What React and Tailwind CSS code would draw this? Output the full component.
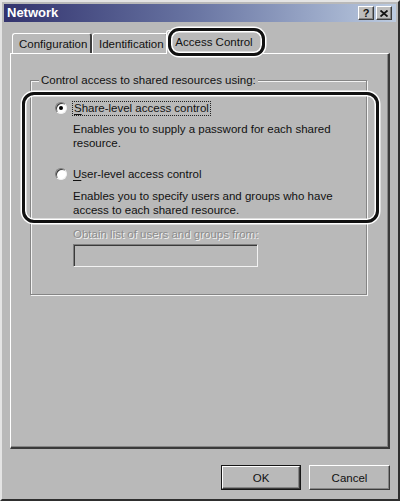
import React from "react";

const raised =
  "border border-t-white border-l-white border-r-[#3c3c3c] border-b-[#3c3c3c] shadow-[inset_-1px_-1px_0_#858585]";

function Radio({ checked }) {
  return (
    <span className="relative inline-flex items-center justify-center w-[12px] h-[12px] rounded-full bg-white border border-t-[#7c7c7c] border-l-[#7c7c7c] border-r-[#f2f2f2] border-b-[#f2f2f2] shadow-[inset_1px_1px_0_#3a3a3a] shrink-0">
      {checked && <span className="w-[4px] h-[4px] rounded-full bg-black" />}
    </span>
  );
}

function Tab({ label, width, active }) {
  if (active) {
    return (
      <div
        className={`relative z-10 -mb-[1px] -ml-[2px] h-[24px] ${width} flex items-center justify-center bg-[#b9b9b9] rounded-t-[3px] border-l border-t border-white border-r-2 border-r-[#3c3c3c]`}
      >
        <span className="-mt-[2px]">{label}</span>
      </div>
    );
  }
  return (
    <div
      className={`h-[20px] ${width} flex items-center pl-[6px] rounded-t-[3px] border-l border-t border-white border-r-2 border-r-[#3c3c3c]`}
    >
      {label}
    </div>
  );
}

export default function App() {
  return (
    <div className="relative w-[400px] h-[501px] bg-[#b9b9b9] border-2 border-t-[#e4e4e4] border-l-[#e4e4e4] border-r-[#2e2e2e] border-b-[#2e2e2e] font-['Liberation_Sans',Arial,sans-serif] text-[11.5px] leading-[14px] text-[#111] overflow-hidden">
      {/* title bar */}
      <div className="mx-[2px] mt-[2px] h-[18px] flex items-center justify-between bg-gradient-to-r from-[#33336e] via-[#6b77a4] to-[#bccbe0] pl-[3px] pr-[4px]">
        <span className="text-white font-bold text-[13px]">Network</span>
        <div className="flex gap-[2px]">
          <div className={`w-[16px] h-[14px] bg-[#bdbdbd] flex items-center justify-center font-bold text-[11px] leading-none ${raised}`}>
            ?
          </div>
          <div className={`w-[16px] h-[14px] bg-[#bdbdbd] flex items-center justify-center ${raised}`}>
            <svg width="8" height="7" viewBox="0 0 8 7">
              <path d="M0.5 0.5 L7.5 6.5 M7.5 0.5 L0.5 6.5" stroke="#111" strokeWidth="1.8" />
            </svg>
          </div>
        </div>
      </div>

      {/* tabs */}
      <div className="mt-[8px] h-[23px] pl-[10px] flex items-end">
        <Tab label="Configuration" width="w-[80px]" />
        <Tab label="Identification" width="w-[76px]" />
        <Tab label="Access Control" width="w-[97px]" active />
      </div>

      {/* panel */}
      <div className="ml-[8px] w-[380px] h-[396px] border-l border-t border-white border-r-2 border-b-2 border-r-[#3a3a3a] border-b-[#3a3a3a] shadow-[inset_-1px_-1px_0_#868686]">
        <div className="relative ml-[19px] mt-[26px] w-[337px] h-[215px] border border-[#858585] shadow-[inset_1px_1px_0_#f2f2f2,1px_1px_0_#f2f2f2]">
          <span className="absolute -top-[8px] left-[8px] px-[2px] bg-[#b9b9b9]">
            Control access to shared resources using:
          </span>

          <div className="pl-[24px] pt-[19px]">
            <div className="flex items-center gap-[6px] h-[16px]">
              <Radio checked />
              <span className="border border-dotted border-[#222] px-[1px] -ml-[1px] leading-[13px]">
                <span className="underline underline-offset-2">S</span>hare-level access control
              </span>
            </div>
            <p className="ml-[18px] mt-[6px] w-[275px]">
              Enables you to supply a password for each shared resource.
            </p>

            <div className="flex items-center gap-[6px] h-[16px] mt-[16px]">
              <Radio />
              <span>
                <span className="underline underline-offset-2">U</span>ser-level access control
              </span>
            </div>
            <p className="ml-[18px] mt-[7px] w-[275px]">
              Enables you to specify users and groups who have access to each shared resource.
            </p>

            <p className="ml-[18px] mt-[10px] text-[#8d8d8d] [text-shadow:1px_1px_0_#f4f4f4]">
              Obtain list of users and groups from:
            </p>
            <div className="ml-[18px] mt-[3px] w-[185px] h-[23px] border border-t-[#7e7e7e] border-l-[#7e7e7e] border-r-[#f2f2f2] border-b-[#f2f2f2] shadow-[inset_1px_1px_0_#3a3a3a]" />
          </div>
        </div>
      </div>

      {/* buttons */}
      <div className="mt-[16px] pr-[8px] flex justify-end gap-[8px]">
        <div className="w-[80px] h-[25px] border border-[#161616] flex">
          <div className={`flex-1 flex items-center justify-center ${raised}`}>OK</div>
        </div>
        <div className={`w-[81px] h-[25px] flex items-center justify-center ${raised}`}>Cancel</div>
      </div>

      {/* annotation outlines */}
      <div className="absolute z-20 left-[20px] top-[90px] w-[357px] h-[131px] rounded-[12px] border-[3px] border-[#111] shadow-[0_0_0_1.5px_#fff,inset_0_0_0_1.5px_#fff]" />
      <div className="absolute z-20 left-[166px] top-[26px] w-[97px] h-[28px] rounded-[11px] border-[3px] border-[#111] shadow-[0_0_0_1.5px_#fff,inset_0_0_0_1.5px_#fff]" />
    </div>
  );
}
